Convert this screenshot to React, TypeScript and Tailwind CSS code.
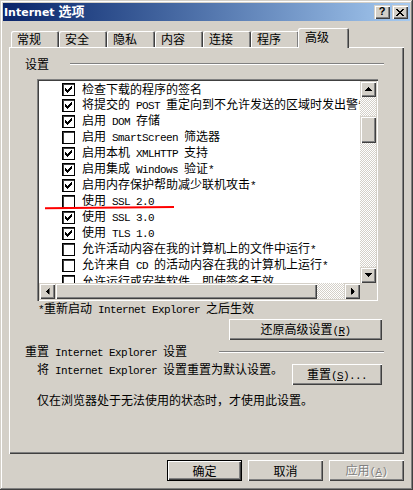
import React from "react";

const ASCII = /^[\x20-\x7e]+$/;

const mono = "font-['Liberation_Mono',monospace] text-[11px] tracking-[-0.6px]";

function T({ s, className = "" }: { s: string; className?: string }) {
  const parts = s.split(/([\x20-\x7e]+)/).filter(Boolean);
  return (
    <span className={"whitespace-pre " + className}>
      {parts.map((p, i) =>
        ASCII.test(p) ? (
          <span key={i} className={mono}>
            {p}
          </span>
        ) : (
          <span key={i}>{p}</span>
        )
      )}
    </span>
  );
}

const CHECK: [number, number, number][] = [
  [6, 0, 1],
  [5, 1, 2],
  [0, 2, 1],
  [4, 2, 3],
  [0, 3, 2],
  [3, 3, 3],
  [0, 4, 5],
  [1, 5, 3],
  [2, 6, 1],
];

function CheckBox({ on }: { on: boolean }) {
  return (
    <div className="w-[13px] h-[13px] shrink-0 bg-white border border-black shadow-[inset_1px_1px_#404040] flex items-center justify-center">
      {on && (
        <svg width="7" height="7" viewBox="0 0 7 7" shapeRendering="crispEdges">
          {CHECK.map(([x, y, w], i) => (
            <rect key={i} x={x} y={y} width={w} height={1} fill="#000" />
          ))}
        </svg>
      )}
    </div>
  );
}

function Tri({ rot }: { rot: string }) {
  return (
    <svg width="7" height="4" viewBox="0 0 7 4" shapeRendering="crispEdges" className={rot}>
      <path d="M3 0h1v1h1v1h1v1h1v1H0V3h1V2h1V1h1z" fill="#000" />
    </svg>
  );
}

const scrollRaised =
  "bg-[#d4d0c8] shadow-[inset_1px_1px_#d4d0c8,inset_2px_2px_#fff,inset_-1px_-1px_#404040,inset_-2px_-2px_#808080]";
const btnRaised =
  "bg-[#d4d0c8] shadow-[inset_1px_1px_#fff,inset_-1px_-1px_#404040,inset_-2px_-2px_#808080]";
const btnDefault =
  "bg-[#d4d0c8] shadow-[inset_1px_1px_#000,inset_-1px_-1px_#000,inset_2px_2px_#fff,inset_-2px_-2px_#404040,inset_-3px_-3px_#808080]";
const checker =
  "bg-[image:repeating-conic-gradient(#fff_0_25%,#d4d0c8_0_50%)] bg-[length:2px_2px]";

const rows: [boolean, string][] = [
  [true, "检查下载的程序的签名"],
  [true, "将提交的 POST 重定向到不允许发送的区域时发出警告"],
  [true, "启用 DOM 存储"],
  [false, "启用 SmartScreen 筛选器"],
  [true, "启用本机 XMLHTTP 支持"],
  [true, "启用集成 Windows 验证*"],
  [true, "启用内存保护帮助减少联机攻击*"],
  [false, "使用 SSL 2.0"],
  [true, "使用 SSL 3.0"],
  [true, "使用 TLS 1.0"],
  [false, "允许活动内容在我的计算机上的文件中运行*"],
  [false, "允许来自 CD 的活动内容在我的计算机上运行*"],
  [false, "允许运行或安装软件，即使签名无效"],
];

const tabs = ["常规", "安全", "隐私", "内容", "连接", "程序"];

const XPIX: [number, number, number][] = [
  [0, 0, 2],
  [6, 0, 2],
  [1, 1, 2],
  [5, 1, 2],
  [2, 2, 4],
  [3, 3, 2],
  [2, 4, 4],
  [1, 5, 2],
  [5, 5, 2],
  [0, 6, 2],
  [6, 6, 2],
];

export default function App() {
  return (
    <div className="relative w-[413px] h-[490px] overflow-hidden bg-[#d4d0c8] p-[3px] flex flex-col font-['Noto_Sans_CJK_SC',sans-serif] text-[12px] leading-[16px] text-black shadow-[inset_-1px_-1px_#404040,inset_1px_1px_#d4d0c8,inset_-2px_-2px_#808080,inset_2px_2px_#fff]">
      {/* Title bar */}
      <div className="h-[18px] shrink-0 flex items-center bg-gradient-to-r from-[#0a246a] to-[#a6caf0] pl-[1px] pr-[2px]">
        <span className="text-white font-bold whitespace-pre leading-[16px]">
          <span className="font-['DejaVu_Sans',sans-serif] text-[11px]">Internet </span>
          <span className="text-[13px]">选项</span>
        </span>
        <div className="ml-auto flex gap-[2px]">
          <div className={`w-[16px] h-[14px] flex items-center justify-center ${scrollRaised}`}>
            <span className="font-['Liberation_Sans',sans-serif] font-bold text-[11px] leading-[11px] pb-[1px]">?</span>
          </div>
          <div className={`w-[16px] h-[14px] flex items-center justify-center ${scrollRaised}`}>
            <svg width="8" height="7" viewBox="0 0 8 7" shapeRendering="crispEdges">
              {XPIX.map(([x, y, w], i) => (
                <rect key={i} x={x} y={y} width={w} height={1} fill="#000" />
              ))}
            </svg>
          </div>
        </div>
      </div>

      {/* Tabs */}
      <div className="mt-[7px] h-[19px] shrink-0 flex items-end pl-[8px]">
        {tabs.map((t) => (
          <div
            key={t}
            className="w-[48px] h-[16px] pl-[6px] flex items-center rounded-t-[2px] shadow-[inset_1px_1px_#fff,inset_-1px_0_#404040,inset_-2px_0_#808080]"
          >
            {t}
          </div>
        ))}
        <div className="relative z-10 -ml-[1px] -mb-[1px] w-[51px] h-[20px] pl-[7px] pb-[2px] flex items-center bg-[#d4d0c8] rounded-t-[2px] shadow-[inset_1px_1px_#fff,inset_-1px_0_#404040,inset_-2px_0_#808080]">
          高级
        </div>
      </div>

      {/* Panel */}
      <div className="mx-[6px] h-[407px] shrink-0 flex flex-col shadow-[inset_1px_1px_#fff,inset_-1px_-1px_#404040,inset_-2px_-2px_#808080]">
        <div className="mt-[9px] h-[16px] flex items-center pl-[16px] pr-[20px]">
          <span>设置</span>
          <div className="ml-auto w-[314px] h-[2px] border-t border-t-[#808080] border-b border-b-white" />
        </div>

        {/* Listbox */}
        <div className="mt-[7px] ml-[28px] w-[341px] h-[222px] p-[2px] bg-white grid grid-cols-[321px_16px] grid-rows-[202px_16px] shadow-[inset_1px_1px_#808080,inset_2px_2px_#404040,inset_-1px_-1px_#fff,inset_-2px_-2px_#d4d0c8]">
          <div className="bg-white overflow-hidden">
            {rows.map(([on, s], i) => (
              <div key={i} className="h-[16px] flex items-center whitespace-nowrap">
                <div className="ml-[23px]">
                  <CheckBox on={on} />
                </div>
                <T s={s} className="ml-[7px]" />
              </div>
            ))}
          </div>
          <div className="flex flex-col">
            <div className={`h-[16px] flex items-center justify-center ${scrollRaised}`}>
              <Tri rot="" />
            </div>
            <div className={`flex-1 ${checker}`}>
              <div className={`mt-[19px] h-[27px] ${scrollRaised}`} />
            </div>
            <div className={`h-[16px] flex items-center justify-center ${scrollRaised}`}>
              <Tri rot="rotate-180" />
            </div>
          </div>
          <div className="flex">
            <div className={`w-[16px] flex items-center justify-center ${scrollRaised}`}>
              <Tri rot="-rotate-90" />
            </div>
            <div className={`flex-1 flex ${checker}`}>
              <div className={`w-[262px] ${scrollRaised}`} />
            </div>
            <div className={`w-[16px] flex items-center justify-center ${scrollRaised}`}>
              <Tri rot="rotate-90" />
            </div>
          </div>
          <div className="bg-[#d4d0c8]" />
        </div>

        <div className="h-[16px] flex items-center pl-[29px]">
          <T s="*重新启动 Internet Explorer 之后生效" />
        </div>

        <div className="mt-[2px] flex justify-end pr-[22px]">
          <div className={`w-[153px] h-[21px] flex items-center justify-center ${btnRaised}`}>
            <span className="whitespace-pre">
              还原高级设置<span className={mono}>(<u>R</u>)</span>
            </span>
          </div>
        </div>

        <div className="mt-[4px] h-[16px] flex items-center pl-[16px] pr-[20px]">
          <T s="重置 Internet Explorer 设置" />
          <div className="ml-auto w-[165px] h-[2px] border-t border-t-[#808080] border-b border-b-white" />
        </div>

        <div className="mt-[2px] flex items-start pl-[28px] pr-[22px]">
          <div className="h-[16px] flex items-center">
            <T s="将 Internet Explorer 设置重置为默认设置。" />
          </div>
          <div className={`ml-auto mt-[2px] w-[90px] h-[21px] flex items-center justify-center ${btnRaised}`}>
            <span className="whitespace-pre">
              重置<span className={mono}>(<u>S</u>)...</span>
            </span>
          </div>
        </div>

        <div className="mt-[7px] h-[16px] flex items-center pl-[28px]">
          <span>仅在浏览器处于无法使用的状态时，才使用此设置。</span>
        </div>
      </div>

      {/* Bottom buttons */}
      <div className="mt-[6px] flex justify-end gap-[6px] pr-[6px]">
        <div className={`w-[75px] h-[21px] flex items-center justify-center ${btnDefault}`}>确定</div>
        <div className={`w-[75px] h-[21px] flex items-center justify-center ${btnRaised}`}>取消</div>
        <div
          className={`w-[75px] h-[21px] flex items-center justify-center text-[#808080] [text-shadow:1px_1px_0_#fff] ${btnRaised}`}
        >
          <span className="whitespace-pre">
            应用<span className={mono}>(<u>A</u>)</span>
          </span>
        </div>
      </div>

      {/* Red annotation line */}
      <svg
        className="absolute left-0 top-0 pointer-events-none"
        width="413"
        height="490"
        viewBox="0 0 413 490"
      >
        <line x1="45" y1="208.3" x2="174" y2="207" stroke="#f00" strokeWidth="2" />
      </svg>
    </div>
  );
}
